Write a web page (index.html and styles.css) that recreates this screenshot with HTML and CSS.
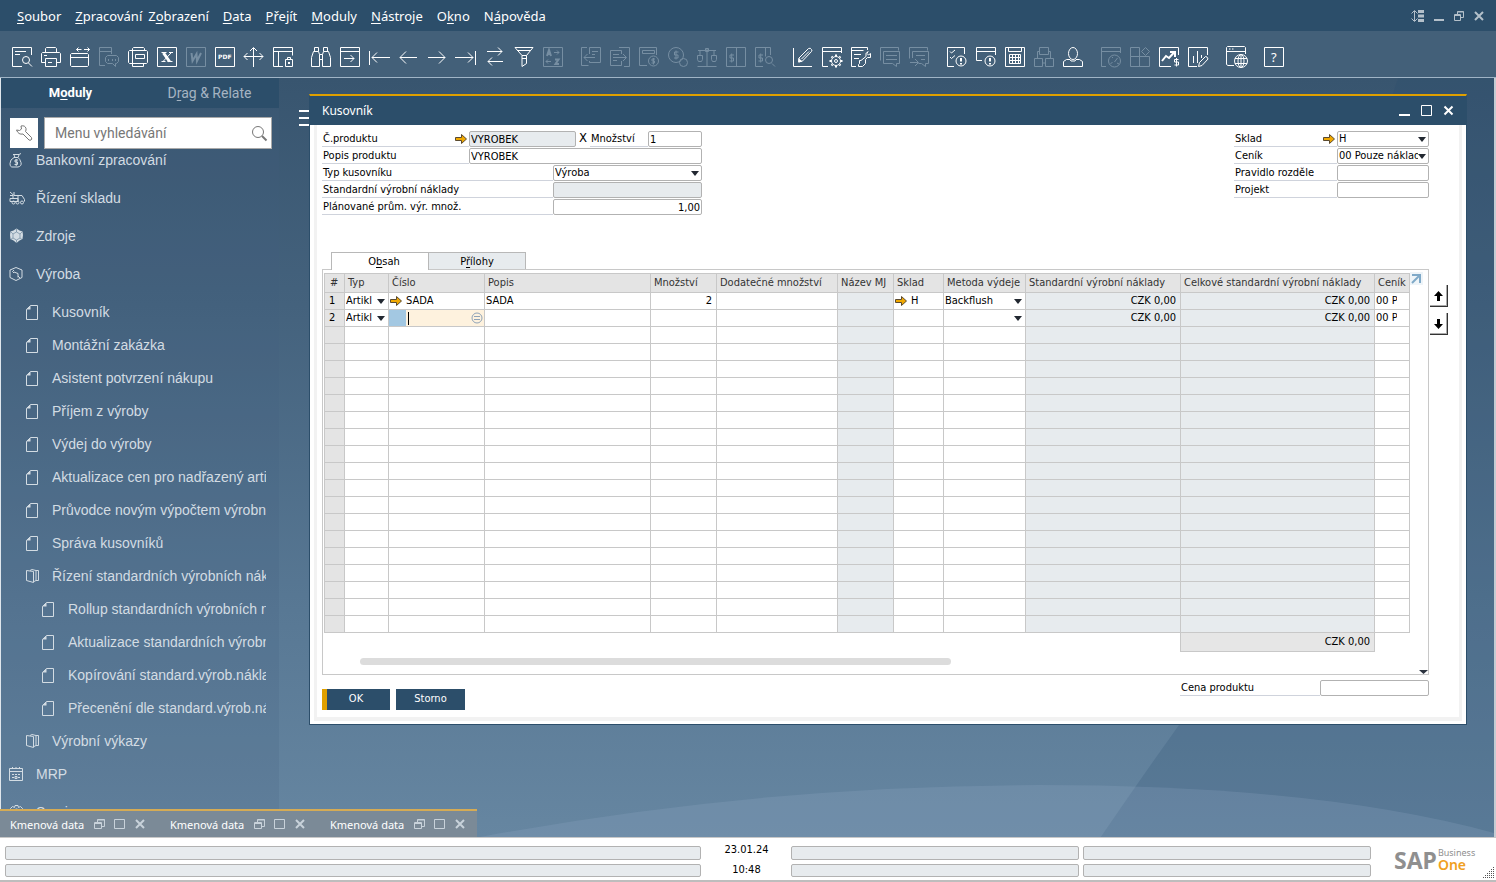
FILE: index.html
```html
<!DOCTYPE html>
<html lang="cs">
  <head>
    <meta charset="UTF-8" />
    <meta name="viewport" content="width=device-width, initial-scale=1.0" />
    <title>SAP Business One - Kusovník</title>
    <link rel="stylesheet" href="styles.css">
  </head>
  <body>
    <!-- opakované ikony -->
    <svg class="defs" width="0" height="0">
      <symbol id="doc" viewBox="0 0 16 16"><path d="M5.500 1.500h7v14h-11v-10z"/><path class="solid" d="M5.500 1.500v4h-4.500z"/></symbol>
      <symbol id="folder" viewBox="0 0 16 16"><path d="M1.500 2.500l7 1v11l-7-2zM5 2.500l2-1 4 1v10l-2 1M11 2.500h2.500v10H11"/></symbol>
      <symbol id="arrow" viewBox="0 0 12 10"><path d="M.5 3.500h6v-3l5 4.500-5 4.500v-3h-6z"/></symbol>
      <symbol id="task-icons" viewBox="0 0 52 12"><path d="M.5 4.500h7v6h-7zM.5 5.500h7M3.500 4V1.500h7v7H8M3.500 2h7M20.500 1.500h10v9h-10z"/><path class="bold" d="M42 2l8 8M50 2l-8 8"/></symbol>
    </svg>

    <!-- hlavní menu -->
    <header class="menubar">
      <nav class="menu">
        <a href="#"><u>S</u>oubor</a>
        <span class="menu-pair">
          <a href="#"><u>Z</u>pracování</a>
          <a href="#">Z<u>o</u>brazení</a>
        </span>
        <a href="#"><u>D</u>ata</a>
        <a href="#"><u>P</u>řejít</a>
        <a href="#"><u>M</u>oduly</a>
        <a href="#"><u>N</u>ástroje</a>
        <a href="#">O<u>k</u>no</a>
        <a href="#">N<u>á</u>pověda</a>
      </nav>
      <div class="app-controls">
        <button type="button" aria-label="Velikost"><svg width="13" height="12" viewBox="0 0 13 12"><path d="M3.500 1v10M.5 3.500l3-3 3 3M.5 8.500l3 3 3-3"/><path class="solid" d="M7 0h6v3H7zM7 4.500h6v3H7zM7 9h6v3H7z"/></svg></button>
        <button type="button" aria-label="Minimalizovat"><svg width="10" height="12" viewBox="0 0 10 12"><path class="solid" d="M0 9h10v2H0z"/></svg></button>
        <button type="button" aria-label="Obnovit"><svg width="10" height="12" viewBox="0 0 10 12"><path d="M.5 4.500h6v6h-6zM.5 5.500h6M3.500 4V1.500h6v6H7M3.500 2h6"/></svg></button>
        <button type="button" aria-label="Zavřít"><svg width="10" height="12" viewBox="0 0 10 12"><path class="bold" d="M1 2l8 8M9 2l-8 8"/></svg></button>
      </div>
    </header>

    <!-- panel nástrojů -->
    <div class="toolbar">
      <div class="tools">
        <button type="button" aria-label="Náhled"><svg viewBox="0 0 20 20"><path d="M10 19.500H.5V.5h19V8M3 4.500h11M3 7.500h5M16.500 16l3.500 3.500"/><circle cx="14" cy="13" r="3.500"/></svg></button>
        <button type="button" aria-label="Tisk"><svg viewBox="0 0 20 20"><path d="M4.500 5.500v-4l1-1h9l1 1v4M4.500 15.500h-4v-9l1-1h17l1 1v9h-4M3 8.500h3M4.500 19.500v-8h11v8zM7 15.500h4"/></svg></button>
        <button type="button" aria-label="E-mail"><svg viewBox="0 0 20 20"><path d="M.5 7.500l1-1h16l1 1v11l-1 1h-16l-1-1zM.5 10.500h18M6.500 2.500h5M8.500.5l-2 2 2 2M14 2.500h5.500M17.500.5l2 2-2 2"/></svg></button>
        <button type="button" aria-label="SMS" disabled><svg viewBox="0 0 20 20"><path d="M6 18.500H.5V.5h12V7M.5 4.500h12M8.500 8.500h9l2 2v4l-2 2h-1v3l-3-3h-5l-2-2v-4zM9.500 12v2M13.500 12v2M16.500 12v2"/></svg></button>
        <button type="button" aria-label="Fax"><svg viewBox="0 0 20 20"><path d="M4.500 3V1.500l1-1h10l1 1V3M4.500 16.500v3h11v-3M.5 4.500l1-1h17l1 1v11l-1 1h-17l-1-1zM4.500 4v12M7.500 7.500h9v4h-9z"/></svg></button>
        <button type="button" aria-label="Excel"><svg viewBox="0 0 20 20"><path d="M.5.500h19v19H.5zM4.500 5.500h5M12 5.500h4M4.500 14.500h4M10.500 14.500h5M14 6l-8 8.500"/><path class="thick" d="M6.500 6l6 8.500"/></svg></button>
        <button type="button" aria-label="Word" disabled><svg viewBox="0 0 20 20"><path d="M.5.500h19v19H.5z"/><path class="bold" d="M5.500 6l1 8 4-7 .5 7 4-8"/></svg></button>
        <button type="button" aria-label="PDF"><svg viewBox="0 0 20 20"><path d="M.5.500h19v19H.5z"/><text class="pdf" x="3" y="12">PDF</text></svg></button>
        <button type="button" aria-label="Přesun"><svg viewBox="0 0 20 20"><path d="M9.500 1v19M0 9.500h19M6 4l3.500-3.500L13 4M3.500 6L0 9.500 3.500 13M15.500 6L19 9.500 15.500 13"/></svg></button>
        <button type="button" aria-label="Zamknout"><svg viewBox="0 0 20 20"><path d="M10 19.500H.5V.5h19v8M.5 4.500h19M5.500 4.500v15M12.500 12.500h7v7h-7zM14.500 12.500v-2h3v2"/><path class="bold" d="M15 16h2"/></svg></button>
      </div>
      <div class="tools">
        <button type="button" aria-label="Najít"><svg viewBox="0 0 20 20"><path d="M3.500 4.500v-4h4v4M12.500 4.500v-4h4v4M2.500 4.500h5l1 3v12h-8v-9zM17.500 4.500h-5l-1 3v12h8v-9zM8.500 7.500h3M8.500 12.500h3"/></svg></button>
        <button type="button" aria-label="Přidat"><svg viewBox="0 0 20 20"><path d="M.5.500h19v19H.5zM.5 4.500h19M4 11.500h10M10.500 8l3.500 3.500-3.500 3.500"/></svg></button>
        <button type="button" aria-label="První"><svg viewBox="0 0 20 20"><path d="M.5 4v14M3 10.500h18M8 5.500l-5 5 5 5"/></svg></button>
        <button type="button" aria-label="Předchozí"><svg viewBox="0 0 20 20"><path d="M2 10.500h17M8 4.500l-6 6 6 6"/></svg></button>
        <button type="button" aria-label="Další"><svg viewBox="0 0 20 20"><path d="M1 10.500h17M12 4.500l6 6-6 6"/></svg></button>
        <button type="button" aria-label="Poslední"><svg viewBox="0 0 20 20"><path d="M19.500 4v14M-1 10.500h18M12 5.500l5 5-5 5"/></svg></button>
        <button type="button" aria-label="Obnovit data"><svg viewBox="0 0 20 20"><path d="M2 4.500h15M13 .5l4 4-4 4M3 14.500h15M7 10.500l-4 4 4 4"/></svg></button>
        <button type="button" aria-label="Filtr"><svg viewBox="0 0 20 20"><path d="M1 .5h18l-6.500 8v8L8 19.500v-11zM3 3.500h13M8 8.500h4.500M8 11.500h4.500"/></svg></button>
        <button type="button" aria-label="Třídit" disabled><svg viewBox="0 0 20 20"><path d="M.5.500h19v19H.5zM11 5.500h5M14 3.500l2 2-2 2M3 14.500h5M5 12.500l-2 2 2 2"/><path class="bold" d="M4 9l2-6 2 6M5 7h3M12 12.500h3.500l-3 4.500H16"/></svg></button>
      </div>
      <div class="tools">
        <button type="button" aria-label="Základní doklad" disabled><svg viewBox="0 0 20 20"><path d="M6 .5H.5v18h7M8.500 7V.5h11v15h-11V14M11 4.500h6M11 7.500h3M3 10.500h11M6.500 7L3 10.500 6.500 14"/></svg></button>
        <button type="button" aria-label="Cílový doklad" disabled><svg viewBox="0 0 20 20"><path d="M11.500 7V3.500H.5v15h11V14M9 .5h10.500v19H14M3 7.500h6M3 10.500h13M3 13.500h4M13 7l3.500 3.500L13 14"/></svg></button>
        <button type="button" aria-label="Hrubý zisk" disabled><svg viewBox="0 0 20 20"><path d="M8 18.500H.5V.5h17V8M3.500 3.500h12v3h-12zM16 12h-3v2h2.500v2H12.500M14.500 11v6.500"/><circle cx="14.500" cy="14" r="5"/></svg></button>
        <button type="button" aria-label="Platební prostředky" disabled><svg viewBox="0 0 20 20"><circle cx="8" cy="8" r="7.500"/><path d="M10.500 5h-4v3h3.500v3H6M8 3.500v9"/><circle cx="15.500" cy="15.500" r="4"/></svg></button>
        <button type="button" aria-label="Objem a hmotnost" disabled><svg viewBox="0 0 20 20"><path d="M.5 19.500h19M10 1v18M1 3.500h18M3 4v4M17 4v4M8.500 1.500h3v3h-3zM.5 8.500h5v4l-1 2h-3l-1-2zM14.500 8.500h5v4l-1 2h-3l-1-2z"/></svg></button>
        <button type="button" aria-label="Účtování" disabled><svg viewBox="0 0 20 20"><path d="M.5.500h19v19H.5zM10.500.5v19M8 8H4v3h3.500v3H3.500M5.700 6.500v9"/></svg></button>
        <button type="button" aria-label="Náhled účtování" disabled><svg viewBox="0 0 20 20"><path d="M8 19.500H.5V.5h15V8M10.500.5v9M8 8H4v3h3.500v3H3.500M5.700 6.500v9M17 16.500l3 3"/><circle cx="14" cy="13" r="3.500"/></svg></button>
      </div>
      <div class="tools">
        <button type="button" aria-label="Upravit"><svg viewBox="0 0 20 20"><path d="M.5 1v18.500H19M6 11L15.500 1.500q2-1 3 1t0 2L9.500 14 6 15zM8.500 12L16 4.500"/><path class="solid" d="M5.500 11l4 3.500-4.500 1z"/></svg></button>
        <button type="button" aria-label="Nastavení formuláře"><svg viewBox="0 0 20 20"><path d="M6 19.500H.5V.5h19V6M.5 4.500h19"/><circle cx="14" cy="14" r="4.500"/><circle cx="14" cy="14" r="1.500"/><path class="bold" d="M14 7.500v2M14 18.500v2M7.500 14h2M18.500 14h2M9.500 9.500l1 1M17.500 17.500l1 1M18.500 9.500l-1 1M10.500 17.500l-1 1"/></svg></button>
        <button type="button" aria-label="Nástroje formuláře"><svg viewBox="0 0 20 20"><path d="M5 19.500H.5V.5h16V3M.5 3.500h12M3 7.500h7M3 11.500h5M17 4.500l-2 2v3l-5 4H8.500v3l-1 1v2h4l3-3v-4l2-2h3v-4l-2 1.500-1.500-1.500z"/></svg></button>
        <button type="button" aria-label="Alerty" disabled><svg viewBox="0 0 20 20"><path d="M.5 13.500V.5h18v3M3.500 4.500h16v12h-3v3l-4-3h-9zM6 8.500h11M6 12.500h11"/></svg></button>
        <button type="button" aria-label="Odeslat zprávu" disabled><svg viewBox="0 0 20 20"><path d="M.5 11.500V.5h18v3M3.500 11V4.500h16v12h-3v3l-4-3h-3M7 8.500h9M12 12.500h4M1 15.500h8M6 12l3.500 3.500L6 19"/></svg></button>
      </div>
      <div class="tools">
        <button type="button" aria-label="Úkoly"><svg viewBox="0 0 20 20"><path d="M7 19.500H.5V.5h17V7M3 4.500l1.500 1.500L8 3M3 10l1.500 1.500L8 8.500"/><circle cx="14" cy="14" r="5"/><path class="bold" d="M14 11v3.500M14 16v1.500"/></svg></button>
        <button type="button" aria-label="Upozornění"><svg viewBox="0 0 20 20"><path d="M6 13.500H.5V.5h19V8M.5 4.500h19"/><circle cx="14" cy="14" r="5"/><path class="bold" d="M14 11v3.500M14 16v1.500"/></svg></button>
        <button type="button" aria-label="Kalendář"><svg viewBox="0 0 20 20"><path d="M.5.500h19v19H.5zM3.500 1v3.500h13V1M4.500 7.500h11v9h-11zM4.500 10.500h11M4.500 13.500h11M7.500 7.500v9M10.500 7.500v9M13.500 7.500v9"/></svg></button>
        <button type="button" aria-label="Organizace" disabled><svg viewBox="0 0 20 20"><path d="M5.500.5h9v7h-9zM.5 11.500h8v8h-8zM11.500 11.500h8v8h-8zM3.500 11V4.500h2M14.500 4.500h2V11M8.500 16h3"/></svg></button>
        <button type="button" aria-label="Uživatel"><svg viewBox="0 0 20 20"><ellipse cx="10" cy="6.500" rx="4.500" ry="6"/><path d="M7 12.500H3.500l-3 2v5h19v-5l-3-2H13l-1 1.500H8z"/></svg></button>
      </div>
      <div class="tools">
        <button type="button" aria-label="Kokpit" disabled><svg viewBox="0 0 20 20"><path d="M5 19.500H.5V.5h19V6M.5 4.500h19M13.500 15l3-4M9.500 16.500l2-1M16 16l2 1M11 10l1 1"/><circle cx="13.500" cy="14" r="6"/></svg></button>
        <button type="button" aria-label="Widgety" disabled><svg viewBox="0 0 20 20"><path d="M9.500 9.500h-9v-9h9zM.5 9.500h19v10H.5zM9.500 9.500v10M15.500.5l4 4-4 4-4-4z"/></svg></button>
        <button type="button" aria-label="Analýza"><svg viewBox="0 0 20 20"><path d="M12 19.500H.5V.5h19V8M19.500 12.500h-4v2.500h4v3h-4M17.500 11v8.500"/><path class="bold" d="M3 14l4-5 3 2 5-5.500M11 5h5v5"/></svg></button>
        <button type="button" aria-label="Upravit analýzu"><svg viewBox="0 0 20 20"><path d="M9 19.500H.5V.5h19V8M5.500 9v7M9.500 4v12M13.500 8v3M10.500 19.500l1-4 6-6q2 0 2.500 2.500l-6 6.500z"/></svg></button>
      </div>
      <div class="tools">
        <button type="button" aria-label="Prohlížeč"><svg viewBox="0 0 20 20"><path d="M8 18.500H2l-1.500-1V.5l1-1h17l1 1V7M.5 4.500h19M3 2h1.500M6 2h1.500"/><circle cx="15" cy="14" r="6.500"/><ellipse cx="15" cy="14" rx="3" ry="6.500"/><path d="M9 11.500h12M9 16.500h12M15 8v12"/></svg></button>
      </div>
      <div class="tools">
        <button type="button" aria-label="Pomoc"><svg viewBox="0 0 20 20"><path d="M.5.500h19v19H.5z"/><text class="help" x="7" y="15">?</text></svg></button>
      </div>
    </div>

    <main class="desktop">
      <svg class="wallpaper" viewBox="0 0 1496 760" preserveAspectRatio="none">
        <path class="shade" d="M1102 760Q1150 690 1186 640L1400 0H1496V760z"/>
        <path class="glow" d="M480 760Q760 708 1040 708T1496 756V760z"/>
      </svg>

      <!-- strom modulů -->
      <aside class="sidebar">
        <div class="side-tabs">
          <button type="button" class="active">M<u>o</u>duly</button>
          <button type="button">D<u>r</u>ag &amp; Relate</button>
        </div>
        <div class="search-row">
          <button type="button" class="wrench" aria-label="Nastavení menu"><svg width="18" height="18" viewBox="0 0 18 18"><path d="M1.500 6l3 .5L6.500 5 6 2Q10 1 11 4.500q.3 1.500-.5 3l6 6q.7 2-.5 2.500t-2 0l-6-6Q3.500 11 1.500 6z"/></svg></button>
          <div class="search-box">
            <input type="text" placeholder="Menu vyhledávání" aria-label="Menu vyhledávání">
            <svg width="15" height="15" viewBox="0 0 15 15"><circle cx="6" cy="6" r="5.500"/><path class="bold" d="M10 10l4.500 4.500"/></svg>
          </div>
        </div>
        <ul class="tree">
          <li class="node"><svg viewBox="0 0 16 16"><path d="M4 2.500h6l2-1M5 5.500q-4 2-4 6t3 3.500h5q4-1 3-4.500T9 5.500zM5 3l1 2.500M10 3L9 5.500M9 8H6v2h2.500v2.500H5.500M7.200 7v7"/></svg><span>Bankovní zpracování</span></li>
          <li class="node"><svg viewBox="0 0 16 16"><path d="M1 8.500h8v3H1zM9 11V5.500h4l2.500 4v2M1 2l4 3.500h4M1 5.500h3v3M5 2v3"/><circle cx="4.500" cy="12.500" r="1.500"/><circle cx="8.500" cy="12.500" r="1.500"/><circle cx="13" cy="12.500" r="1.500"/></svg><span>Řízení skladu</span></li>
          <li class="node"><svg viewBox="0 0 16 16"><path class="solid" d="M7.500.5l3 2 3 1 .5 3.500-.5 4-3 1.500-3 2.500-3-2.500-3-1.500L1 7l.5-3.500 3-1z"/><path class="dark" d="M7.500 4L11 6v4l-3.500 2L4 10V6zM7.500 1v3M11 6l2-2M11 10l2 1.500M7.500 12v3M4 10l-2.500 1.500M4 6L2 4"/></svg><span>Zdroje</span></li>
          <li class="node"><svg viewBox="0 0 16 16"><path d="M7 1.500l6 2.500v7.500L7 14.500l-6-3V4zM5 6l4 1.500v4M5 4l-1.500 1.500L5 7M9 10l2 2"/></svg><span>Výroba</span></li>
          <li>
            <ul class="subtree">
              <li class="node doc"><svg><use href="#doc"/></svg><span>Kusovník</span></li>
              <li class="node doc"><svg><use href="#doc"/></svg><span>Montážní zakázka</span></li>
              <li class="node doc"><svg><use href="#doc"/></svg><span>Asistent potvrzení nákupu</span></li>
              <li class="node doc"><svg><use href="#doc"/></svg><span>Příjem z výroby</span></li>
              <li class="node doc"><svg><use href="#doc"/></svg><span>Výdej do výroby</span></li>
              <li class="node doc"><svg><use href="#doc"/></svg><span>Aktualizace cen pro nadřazený artikl</span></li>
              <li class="node doc"><svg><use href="#doc"/></svg><span>Průvodce novým výpočtem výrobních nákladů</span></li>
              <li class="node doc"><svg><use href="#doc"/></svg><span>Správa kusovníků</span></li>
              <li class="node doc"><svg><use href="#folder"/></svg><span>Řízení standardních výrobních nákladů</span></li>
              <li class="node doc deep"><svg><use href="#doc"/></svg><span>Rollup standardních výrobních nákladů</span></li>
              <li class="node doc deep"><svg><use href="#doc"/></svg><span>Aktualizace standardních výrobních nákladů</span></li>
              <li class="node doc deep"><svg><use href="#doc"/></svg><span>Kopírování standard.výrob.nákladů</span></li>
              <li class="node doc deep"><svg><use href="#doc"/></svg><span>Přecenění dle standard.výrob.nákladů</span></li>
              <li class="node doc"><svg><use href="#folder"/></svg><span>Výrobní výkazy</span></li>
            </ul>
          </li>
          <li class="node"><svg viewBox="0 0 16 16"><path d="M.5 2.500h13v12H.5zM.5 5.500h13M3.500 1v2M7 1v2M10.500 1v2M3 8.500h2M6 8.500h2M9 8.500h2M3 11.500h2M9 11.500h2M6 10.500h2v2H6z"/></svg><span>MRP</span></li>
          <li class="node"><svg viewBox="0 0 16 16"><circle cx="7.500" cy="8" r="3"/><path d="M6 1.500h3l.5 2 2-1 2 2-1 2 2 .5v3l-2 .5 1 2-2 2-2-1-.5 2H6l-.5-2-2 1-2-2 1-2-2-.5V7l2-.5-1-2 2-2 2 1z"/></svg><span>Servis</span></li>
        </ul>
      </aside>

      <div class="hamburger"></div>

      <!-- okno kusovníku -->
      <section class="window">
        <div class="window-title">
          <h1>Kusovník</h1>
          <div class="window-controls">
            <button type="button" aria-label="Minimalizovat"><svg width="11" height="11" viewBox="0 0 11 11"><path class="solid" d="M0 9h11v2H0z"/></svg></button>
            <button type="button" aria-label="Maximalizovat"><svg width="11" height="11" viewBox="0 0 11 11"><path d="M.5.500h10v10H.5z"/></svg></button>
            <button type="button" aria-label="Zavřít"><svg width="11" height="11" viewBox="0 0 11 11"><path class="bold" d="M1.500 1.500l8 8M9.500 1.500l-8 8"/></svg></button>
          </div>
        </div>

        <div class="window-body">
          <div class="head-form">
            <div class="form-left">
              <div class="row">
                <label class="lbl w-code" for="code">Č.produktu<svg class="link-arrow"><use href="#arrow"/></svg></label>
                <input class="field readonly grow" id="code" value="VYROBEK" readonly>
                <span class="times">X</span>
                <label class="lbl w-qty" for="qty">Množství</label>
                <input class="field w-num" id="qty" value="1">
              </div>
              <div class="row">
                <label class="lbl w-code" for="desc">Popis produktu</label>
                <input class="field grow" id="desc" value="VYROBEK">
              </div>
              <div class="row">
                <label class="lbl grow" for="type">Typ kusovníku</label>
                <select class="field w-value" id="type"><option>Výroba</option></select>
              </div>
              <div class="row">
                <label class="lbl grow" for="cost">Standardní výrobní náklady</label>
                <input class="field readonly w-value" id="cost" readonly>
              </div>
              <div class="row">
                <label class="lbl grow" for="plan">Plánované prům. výr. množ.</label>
                <input class="field w-value num" id="plan" value="1,00">
              </div>
            </div>
            <div class="form-right">
              <div class="row">
                <label class="lbl grow" for="whs">Sklad<svg class="link-arrow"><use href="#arrow"/></svg></label>
                <select class="field w-side" id="whs"><option>H</option></select>
              </div>
              <div class="row">
                <label class="lbl grow" for="price">Ceník</label>
                <select class="field w-side" id="price"><option>00 Pouze náklady</option></select>
              </div>
              <div class="row">
                <label class="lbl grow" for="rule"><span class="clip">Pravidlo rozdělení</span></label>
                <input class="field w-side" id="rule">
              </div>
              <div class="row">
                <label class="lbl grow" for="project">Projekt</label>
                <input class="field w-side" id="project">
              </div>
            </div>
          </div>

          <div class="tabs">
            <button type="button" class="active">O<u>b</u>sah</button>
            <button type="button">P<u>ř</u>ílohy</button>
          </div>

          <div class="content">
            <div class="panel">
              <div class="grid-area">
                <table class="grid">
                  <colgroup>
                    <col class="c-no"><col class="c-type"><col class="c-item"><col class="c-desc">
                    <col class="c-qty"><col class="c-extra"><col class="c-uom calc"><col class="c-whs">
                    <col class="c-method"><col class="c-cost calc"><col class="c-total calc"><col class="c-list">
                  </colgroup>
                  <thead>
                    <tr>
                      <th>#</th><th>Typ</th><th>Číslo</th><th>Popis</th><th>Množství</th><th>Dodatečné množství</th>
                      <th>Název MJ</th><th>Sklad</th><th>Metoda výdeje</th><th>Standardní výrobní náklady</th>
                      <th>Celkové standardní výrobní náklady</th><th>Ceník</th>
                    </tr>
                  </thead>
                  <tbody id="rows">
                    <tr>
                      <td>1</td>
                      <td><select aria-label="Typ"><option>Artikl</option></select></td>
                      <td><div class="cell"><svg class="link-arrow"><use href="#arrow"/></svg>SADA</div></td>
                      <td>SADA</td>
                      <td class="num">2</td>
                      <td></td>
                      <td></td>
                      <td><div class="cell"><svg class="link-arrow"><use href="#arrow"/></svg>H</div></td>
                      <td><select aria-label="Metoda výdeje"><option>Backflush</option></select></td>
                      <td class="num">CZK 0,00</td>
                      <td class="num">CZK 0,00</td>
                      <td><span class="clip">00 Pouze</span></td>
                    </tr>
                    <tr>
                      <td>2</td>
                      <td><select aria-label="Typ"><option>Artikl</option></select></td>
                      <td class="editing"><div class="cell"><i></i><b></b><input aria-label="Číslo"><svg viewBox="0 0 12 12"><circle cx="6" cy="6" r="5"/><path d="M3 4.500h6M3 7.500h6"/></svg></div></td>
                      <td></td>
                      <td></td>
                      <td></td>
                      <td></td>
                      <td></td>
                      <td><select aria-label="Metoda výdeje"><option></option></select></td>
                      <td class="num">CZK 0,00</td>
                      <td class="num">CZK 0,00</td>
                      <td><span class="clip">00 Pouze</span></td>
                    </tr>
                  </tbody>
                  <tfoot>
                    <tr><td colspan="10"></td><td class="sum num">CZK 0,00</td><td></td></tr>
                  </tfoot>
                </table>
                <button type="button" class="expand" aria-label="Rozbalit"><svg width="13" height="13" viewBox="0 0 13 13"><path d="M2 3h8v8M10 3l-8 8"/></svg></button>
              </div>
              <div class="scroll-track"><div class="scroll-thumb"></div></div>
              <div class="panel-more"></div>
            </div>
            <div class="order-buttons">
              <button type="button" aria-label="Nahoru"><svg width="9" height="10" viewBox="0 0 9 10"><path d="M4.500 0L9 5H6v5H3V5H0z"/></svg></button>
              <button type="button" aria-label="Dolů"><svg width="9" height="10" viewBox="0 0 9 10"><path d="M4.500 10L9 5H6V0H3v5H0z"/></svg></button>
            </div>
          </div>

          <div class="window-footer">
            <div class="actions">
              <button type="button" class="primary">OK</button>
              <button type="button">Storno</button>
            </div>
            <div class="row product-price">
              <label class="lbl grow" for="total">Cena produktu</label>
              <input class="field w-price" id="total">
            </div>
          </div>
        </div>
      </section>

      <!-- minimalizovaná okna -->
      <div class="taskbar">
        <div class="task"><span>Kmenová data</span><svg><use href="#task-icons"/></svg></div>
        <div class="task"><span>Kmenová data</span><svg><use href="#task-icons"/></svg></div>
        <div class="task"><span>Kmenová data</span><svg><use href="#task-icons"/></svg></div>
      </div>
    </main>

    <footer class="statusbar">
      <div class="status-col wide"><span></span><span></span></div>
      <div class="clock"><span>23.01.24</span><span>10:48</span></div>
      <div class="status-col"><span></span><span></span></div>
      <div class="status-col"><span></span><span></span></div>
      <div class="logo">
        <strong>SAP</strong>
        <div><span>Business</span><em>One</em></div>
      </div>
      <svg class="grip" width="12" height="12" viewBox="0 0 12 12"><path d="M10 .5h2M8 2.500h4M6 4.500h6M4 6.500h8M2 8.500h10M0 10.500h12"/></svg>
    </footer>

    <script src="script.js"></script>
  </body>
</html>
```
FILE: styles.css
```css
:root {
  --navy: #2c4e6a;
  --toolbar: #436079;
  --gold: #e0a000;
  --line: #c8c8c8;
  --field-line: #b2b2b2;
  --readonly: #e7ebee;
  --ui: "DejaVu Sans Condensed", "Noto Sans", sans-serif;
}

* {
  box-sizing: border-box;
}

body {
  margin: 0;
  height: 100vh;
  display: flex;
  flex-direction: column;
  overflow: hidden;
  background: #fff;
  color: #000;
  font: 11px/14px var(--ui);
}

button,
input,
select {
  margin: 0;
  padding: 0;
  border: 0;
  border-radius: 0;
  background: none;
  color: inherit;
  font: inherit;
}

svg {
  display: block;
  flex: none;
  fill: none;
  stroke: currentColor;
  overflow: visible;
}

svg .solid {
  fill: currentColor;
  stroke: none;
}

svg .bold {
  stroke-width: 2;
}

svg .thick {
  stroke-width: 3;
}

.defs {
  position: absolute;
}

/* hlavní menu */
.menubar {
  display: flex;
  justify-content: space-between;
  align-items: center;
  height: 31px;
  padding: 0 12px 0 17px;
  background: var(--navy);
}

.menu,
.menu-pair {
  display: flex;
  gap: 14px;
}

.menu-pair {
  gap: 6px;
}

.menu a {
  color: #fff;
  font: 13px/20px "Noto Sans", sans-serif;
  text-decoration: none;
}

u {
  text-underline-offset: 2px;
}

.app-controls {
  display: flex;
  gap: 10px;
  color: #b4c0ca;
}

/* panel nástrojů */
.toolbar {
  display: flex;
  gap: 18px;
  height: 47px;
  padding: 16px 12px 0;
  background: var(--toolbar);
  border-bottom: 1px solid #a0b4c6;
}

.tools {
  display: flex;
  gap: 9px;
}

.tools button {
  width: 20px;
  height: 20px;
  color: #fff;
}

.tools button:disabled {
  color: #768ea2;
}

.tools text {
  fill: currentColor;
  stroke: none;
}

.tools .pdf {
  font: bold 6px "DejaVu Sans", sans-serif;
}

.tools .help {
  font: 13px "Noto Sans", sans-serif;
}

/* plocha */
.desktop {
  position: relative;
  flex: 1;
  display: flex;
  align-items: flex-start;
  min-height: 0;
  border-left: 1px solid #dfe6ec;
  border-right: 2px solid #c4ccd3;
  background: linear-gradient(#38556f, #44627d 30%, #587894 70%, #6686a1);
}

.wallpaper {
  position: absolute;
  inset: 0;
  width: 100%;
  height: 100%;
  stroke: none;
}

.wallpaper .shade {
  fill: rgba(38, 74, 108, 0.2);
}

.wallpaper .glow {
  fill: rgba(150, 172, 200, 0.22);
}

/* strom modulů */
.sidebar {
  position: relative;
  display: flex;
  flex-direction: column;
  width: 278px;
  height: calc(100% - 28px);
  background: rgba(64, 96, 128, 0.18);
  color: #d3dce3;
}

.side-tabs {
  display: flex;
  height: 30px;
  background: var(--navy);
}

.side-tabs button {
  flex: 1;
  color: #a5b4c2;
  font: 14px/30px Roboto, sans-serif;
}

.side-tabs .active {
  color: #fff;
  font-size: 13px;
  font-weight: 700;
}

.search-row {
  display: flex;
  align-items: center;
  gap: 6px;
  padding: 9px 7px 0 9px;
}

.wrench {
  display: flex;
  align-items: center;
  justify-content: center;
  width: 28px;
  height: 30px;
  background: #fff;
  color: #777;
}

.search-box {
  flex: 1;
  display: flex;
  align-items: center;
  height: 32px;
  padding: 0 4px 0 10px;
  background: #fff;
  border: 1px solid #a9a9a9;
  color: #777;
}

.search-box input {
  flex: 1;
  min-width: 0;
  font: 14px/20px Roboto, sans-serif;
}

.search-box input::placeholder {
  color: #777;
}

ul {
  margin: 0;
  padding: 0;
  list-style: none;
}

.tree {
  flex: 1;
  min-height: 0;
  overflow: hidden;
  margin-right: 13px;
  padding-left: 8px;
}

.tree > li:first-child {
  margin-top: -8px;
}

.node {
  display: flex;
  align-items: center;
  gap: 11px;
  height: 38px;
  overflow: hidden;
  font: 14px/18px "Liberation Sans", Arial, sans-serif;
  white-space: nowrap;
}

.node svg {
  width: 16px;
  height: 16px;
}

.node .dark {
  stroke: #6f889d;
  stroke-width: 0.7;
}

.subtree {
  margin: 2px 0 -2px;
}

.doc {
  height: 33px;
  padding-left: 16px;
}

.deep {
  padding-left: 32px;
}

.hamburger {
  position: absolute;
  left: 298px;
  top: 32px;
  width: 20px;
  height: 16px;
  border-top: 2px solid #fff;
  border-bottom: 2px solid #fff;
  background: linear-gradient(#fff, #fff) 0 5px / 100% 2px no-repeat;
}

/* okno */
.window {
  position: absolute;
  left: 308px;
  right: 27px;
  top: 16px;
  border: 1px solid var(--navy);
  border-top: 2px solid var(--gold);
  background: #fff;
}

.window-title {
  display: flex;
  justify-content: space-between;
  align-items: center;
  height: 29px;
  padding: 0 12px;
  background: var(--navy);
  color: #fff;
}

.window-title h1 {
  margin: 0;
  font: 12px/16px "Noto Sans", sans-serif;
}

.window-controls {
  display: flex;
  gap: 11px;
}

.window-body {
  margin: 0 4px 3px;
  padding: 6px 10px 7px 5px;
  border: solid #f2f2f2;
  border-width: 0 3px 4px;
}

.head-form {
  display: flex;
  justify-content: space-between;
  margin-right: 20px;
}

.form-left,
.form-right {
  display: flex;
  flex-direction: column;
  gap: 1px;
}

.form-left {
  width: 380px;
}

.form-right {
  width: 195px;
}

.row {
  display: flex;
  height: 16px;
}

.lbl {
  display: flex;
  align-items: center;
  justify-content: space-between;
  height: 16px;
  padding: 0 2px 0 1px;
  border-bottom: 1px solid #cfd3dc;
  white-space: nowrap;
}

.grow {
  flex: 1;
  min-width: 0;
}

.w-code {
  width: 147px;
}

.w-qty {
  width: 58px;
}

.w-num {
  width: 54px;
}

.w-value {
  width: 149px;
}

.w-side {
  width: 92px;
}

.w-price {
  width: 109px;
}

.clip {
  display: block;
  width: 79px;
  overflow: hidden;
  white-space: nowrap;
}

.times {
  width: 14px;
  padding-left: 3px;
  font-size: 13px;
}

.field {
  height: 16px;
  padding: 0 1px;
  border: 1px solid var(--field-line);
  border-radius: 2px;
  background: #fff;
  line-height: 14px;
}

.readonly {
  background: var(--readonly);
}

.num {
  text-align: right;
}

select {
  appearance: none;
}

select.field,
.grid select {
  background: url("data:image/svg+xml,%3Csvg xmlns='http://www.w3.org/2000/svg' width='8' height='5'%3E%3Cpath d='M0 0h8L4 5z' fill='%23222831'/%3E%3C/svg%3E") right 2px center no-repeat;
}

select.field {
  padding-right: 10px;
}

.link-arrow {
  width: 12px;
  height: 10px;
  fill: #f0a800;
  stroke: #5a4a30;
}

/* záložky */
.tabs {
  display: flex;
  margin: 37px 0 0 9px;
}

.tabs button {
  width: 97px;
  height: 18px;
  border: 1px solid #b8b8b8;
  border-bottom: 0;
  background: var(--readonly);
}

.tabs button + button {
  border-left: 0;
}

.tabs .active {
  position: relative;
  width: 98px;
  padding-left: 8px;
  background: #fff;
}

.content {
  display: flex;
}

.panel {
  flex: 1;
  min-width: 0;
  margin-top: -1px;
  border: 1px solid var(--line);
}

.grid-area {
  display: flex;
  padding: 3px 5px 0 1px;
}

.grid {
  flex: 1;
  width: 100%;
  table-layout: fixed;
  border-collapse: collapse;
}

.c-no { width: 20px; background: #e4e4e4; }
.c-type { width: 44px; }
.c-item { width: 96px; }
.c-qty { width: 66px; }
.c-extra { width: 121px; }
.c-uom { width: 56px; }
.c-whs { width: 50px; }
.c-method { width: 82px; }
.c-cost { width: 155px; }
.c-total { width: 194px; }
.c-list { width: 35px; }

.calc {
  background: var(--readonly);
}

.grid th,
.grid td {
  height: 17px;
  padding: 0 1px;
  border: 1px solid var(--line);
  overflow: hidden;
  line-height: 14px;
  white-space: nowrap;
}

.grid th {
  height: 19px;
  padding: 0 3px;
  background: #e4e4e4;
  color: #333;
  font-weight: 400;
  text-align: left;
}

.grid td:first-child {
  padding-left: 4px;
}

.grid th:first-child {
  padding-left: 5px;
}

.grid .num {
  padding-right: 4px;
}

.grid tfoot td {
  height: 19px;
  border: 0;
  background: #fff;
}

.grid tfoot .sum {
  border: 1px solid var(--line);
  background: #e6e6e6;
}

.grid select {
  display: block;
  width: 100%;
  height: 14px;
  padding-right: 10px;
}

.grid .clip {
  width: 21px;
}

.cell {
  display: flex;
  align-items: center;
  gap: 4px;
}

.grid .editing {
  padding: 0;
  background: #fef2de;
}

.editing .cell {
  gap: 2px;
  padding-right: 1px;
  color: #8fa3b8;
}

.editing i {
  width: 17px;
  height: 16px;
  background: #a3c8e2;
}

.editing b {
  width: 1px;
  height: 13px;
  background: #000;
}

.editing input {
  flex: 1;
  min-width: 0;
  height: 14px;
  outline: 0;
}

.editing svg {
  width: 12px;
  height: 12px;
}

.expand {
  width: 13px;
  height: 13px;
  margin-top: -1px;
  background: #eef4f8;
  color: #7fa9c8;
}

.expand svg {
  stroke-width: 2;
}

.scroll-track {
  margin: 6px 12px 0 37px;
}

.scroll-thumb {
  width: 56%;
  height: 7px;
  border-radius: 4px;
  background: #dcdcdc;
}

.panel-more {
  width: 9px;
  height: 4px;
  margin: 5px 0 0 auto;
  background: #2c3440;
  clip-path: polygon(0 0, 100% 0, 50% 100%);
}

.order-buttons {
  display: flex;
  flex-direction: column;
  gap: 6px;
  padding: 15px 1px 0;
}

.order-buttons button {
  display: flex;
  align-items: center;
  justify-content: center;
  width: 18px;
  height: 22px;
  border: solid #333;
  border-width: 0 1px 1px 0;
  box-shadow: inset -1px -1px #aaa;
}

.order-buttons svg {
  fill: #000;
  stroke: none;
}

.window-footer {
  display: flex;
  justify-content: space-between;
  margin-right: 20px;
  padding-top: 5px;
}

.product-price {
  width: 249px;
}

.actions {
  display: flex;
  gap: 6px;
  padding-top: 9px;
}

.actions button {
  width: 69px;
  height: 21px;
  padding-bottom: 2px;
  background: var(--navy);
  color: #fff;
}

.actions .primary {
  width: 68px;
  padding-right: 5px;
  border-left: 5px solid var(--gold);
}

/* minimalizovaná okna */
.taskbar {
  position: absolute;
  left: -1px;
  bottom: 0;
  display: flex;
  height: 28px;
  background: #7b8a97;
  border-top: 2px solid #d5ab55;
}

.task {
  display: flex;
  align-items: center;
  justify-content: space-between;
  width: 160px;
  padding: 2px 14px 0 10px;
  color: #fff;
  font: 11px/16px "Noto Sans", sans-serif;
}

.task:last-child {
  width: 157px;
  padding-right: 11px;
}

.task svg {
  width: 52px;
  height: 12px;
  margin-bottom: 2px;
  color: #c8d2da;
}

/* stavový řádek */
.statusbar {
  position: relative;
  display: flex;
  gap: 4px;
  height: 45px;
  padding: 8px 8px 3px 5px;
  border-top: 1px solid var(--line);
  border-bottom: 2px solid #bdbdbd;
  background: #fff;
}

.status-col {
  flex: 288;
  display: flex;
  flex-direction: column;
  gap: 4px;
}

.status-col.wide {
  flex: 697;
}

.status-col span {
  height: 14px;
  border: 1px solid var(--field-line);
  border-radius: 2px;
  background: var(--readonly);
}

.clock {
  display: flex;
  flex-direction: column;
  gap: 6px;
  width: 82px;
  margin-top: -3px;
  text-align: center;
}

.logo {
  display: flex;
  gap: 1px;
  width: 113px;
  padding-left: 19px;
  color: #8f8f8f;
}

.logo strong {
  font: 700 23px/28px "Noto Sans", sans-serif;
}

.logo div {
  display: flex;
  flex-direction: column;
  padding-top: 2px;
}

.logo span {
  font: 9px/10px "Noto Sans", sans-serif;
}

.logo em {
  color: #f0a020;
  font: 600 14px/14px "Noto Sans", sans-serif;
}

.grip {
  position: absolute;
  right: 1px;
  bottom: 1px;
  stroke: #555;
  stroke-dasharray: 1 1;
}
```
FILE: script.js
```js
// doplnění prázdných řádků matice
const rows = document.getElementById("rows");
const columnCount = document.querySelectorAll(".grid col").length;

for (let i = rows.rows.length; i < 20; i++) {
  const row = rows.insertRow();
  for (let c = 0; c < columnCount; c++) {
    row.insertCell();
  }
}
```
